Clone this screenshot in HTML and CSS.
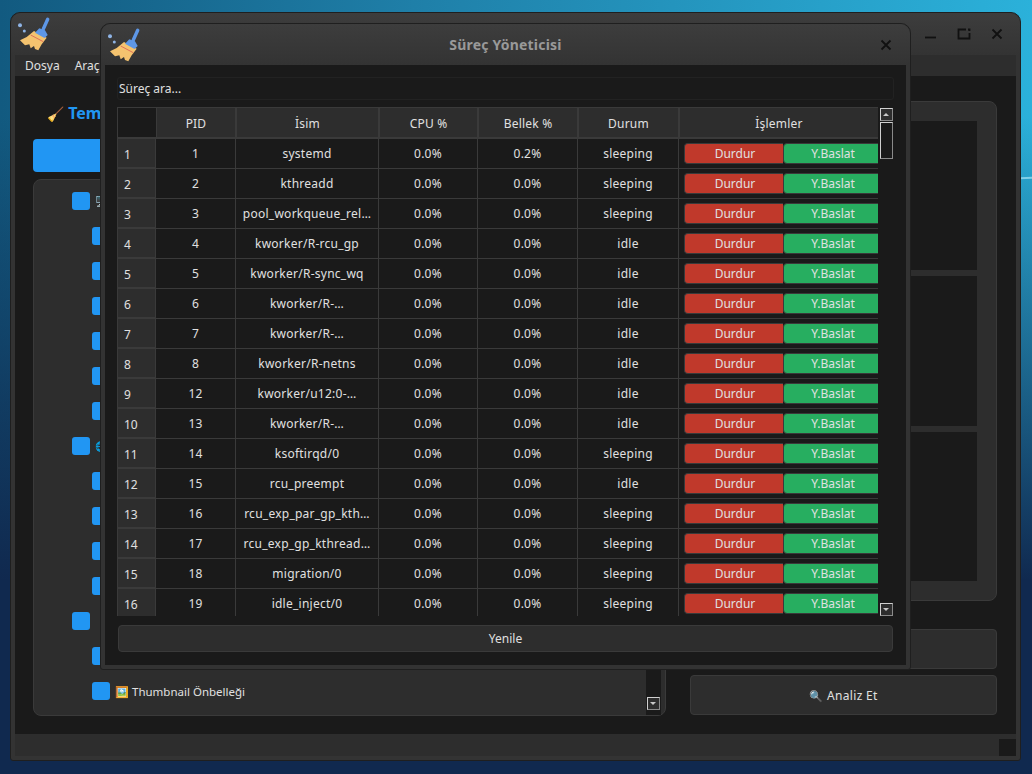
FILE: index.html
```html
<!DOCTYPE html>
<html lang="tr">
<head>
<meta charset="utf-8">
<title>Süreç Yöneticisi</title>
<link rel="stylesheet" href="styles.css">
</head>
<body>
<svg class="defs" width="0" height="0">
  <symbol id="broom" viewBox="0 0 34 34">
    <circle cx="2" cy="8.3" r="2" fill="#8fb4e6"/>
    <circle cx="6.3" cy="14" r="1.5" fill="#8fb4e6"/>
    <path d="M29.7 2.3 25.3 12" stroke="#5e97e6" stroke-width="3.4" stroke-linecap="round" fill="none"/>
    <path d="M2 23.3 8.7 20 16 14 28.7 20.7 23.7 27.3 20.3 33.3 17 32 16 29 12.7 31.3 11.3 27.3 7 28.3Z" fill="#f4c36f"/>
    <path d="M12.7 18 25.3 24.7" stroke="#e0705a" stroke-width="1" fill="none"/>
    <path d="M21.3 11.3 27 13.3 29.7 18 26.5 21 17 15.7Z" fill="#5e97e6"/>
  </symbol>
</svg>
<main class="desktop">
  <span class="streak"></span>
  <section class="window main-window">
    <header class="titlebar main-titlebar">
      <svg class="app-icon"><use href="#broom"/></svg>
      <div class="controls">
        <svg class="ctl" viewBox="0 0 14 14"><path d="M1 10.5H12" class="ctl-line"/></svg>
        <svg class="ctl" viewBox="0 0 14 14"><path d="M9 2.5H1.5V11.5H12.5V6M11 2.5H12.5V4" class="ctl-line"/></svg>
        <svg class="ctl" viewBox="0 0 14 14"><path d="M2.5 2.5 11.5 11.5M11.5 2.5 2.5 11.5" class="ctl-line"/></svg>
      </div>
    </header>
    <nav class="menubar"><span>Dosya</span><span>Araçlar</span></nav>
    <div class="content">
      <div class="left-col">
        <h1 class="heading"><span class="heading-emoji">🧹</span> Temizlik</h1>
        <button class="select-all"></button>
        <div class="check-group">
          <div class="checks">
            <label class="check l0"><i></i><span class="peek">🖥️</span></label>
            <label class="check l1"><i></i></label>
            <label class="check l1"><i></i></label>
            <label class="check l1"><i></i></label>
            <label class="check l1"><i></i></label>
            <label class="check l1"><i></i></label>
            <label class="check l1"><i></i></label>
            <label class="check l0"><i></i><span class="peek">🌐</span></label>
            <label class="check l1"><i></i></label>
            <label class="check l1"><i></i></label>
            <label class="check l1"><i></i></label>
            <label class="check l1"><i></i></label>
            <label class="check l0"><i></i></label>
            <label class="check l1"><i></i></label>
            <label class="check l1"><i></i><span class="thumb"><span class="small-emoji">🖼️</span> Thumbnail Önbelleği</span></label>
          </div>
          <div class="scrollbar group-scroll">
            <span class="sb-btn down"></span>
          </div>
        </div>
      </div>
      <div class="right-col">
        <div class="info-group">
          <div class="info-pane"></div>
          <div class="info-pane"></div>
          <div class="info-pane"></div>
        </div>
        <button class="wide-btn"></button>
        <button class="wide-btn"><span class="small-emoji">🔍</span> Analiz Et</button>
      </div>
    </div>
    <footer class="statusbar"><span class="grip"></span></footer>
  </section>

  <section class="window dialog">
    <header class="titlebar dialog-titlebar">
      <svg class="app-icon"><use href="#broom"/></svg>
      <h2 class="dialog-title">Süreç Yöneticisi</h2>
      <svg class="ctl" viewBox="0 0 14 14"><path d="M2.5 2.5 11.5 11.5M11.5 2.5 2.5 11.5" class="ctl-line"/></svg>
    </header>
    <div class="dialog-body">
      <div class="search">Süreç ara...</div>
      <div class="table-wrap">
        <div class="table-clip">
          <table class="procs">
            <colgroup>
              <col class="c-num"><col class="c-pid"><col class="c-name"><col class="c-cpu"><col class="c-mem"><col class="c-state"><col class="c-act">
            </colgroup>
            <thead>
              <tr><th class="corner"></th><th>PID</th><th>İsim</th><th>CPU %</th><th>Bellek %</th><th>Durum</th><th>İşlemler</th></tr>
            </thead>
            <tbody>
              <tr><th>1</th><td>1</td><td>systemd</td><td>0.0%</td><td>0.2%</td><td>sleeping</td><td><div class="acts"><span class="stop">Durdur</span><span class="restart">Y.Baslat</span></div></td></tr>
              <tr><th>2</th><td>2</td><td>kthreadd</td><td>0.0%</td><td>0.0%</td><td>sleeping</td><td><div class="acts"><span class="stop">Durdur</span><span class="restart">Y.Baslat</span></div></td></tr>
              <tr><th>3</th><td>3</td><td>pool_workqueue_rel…</td><td>0.0%</td><td>0.0%</td><td>sleeping</td><td><div class="acts"><span class="stop">Durdur</span><span class="restart">Y.Baslat</span></div></td></tr>
              <tr><th>4</th><td>4</td><td>kworker/R-rcu_gp</td><td>0.0%</td><td>0.0%</td><td>idle</td><td><div class="acts"><span class="stop">Durdur</span><span class="restart">Y.Baslat</span></div></td></tr>
              <tr><th>5</th><td>5</td><td>kworker/R-sync_wq</td><td>0.0%</td><td>0.0%</td><td>idle</td><td><div class="acts"><span class="stop">Durdur</span><span class="restart">Y.Baslat</span></div></td></tr>
              <tr><th>6</th><td>6</td><td>kworker/R-…</td><td>0.0%</td><td>0.0%</td><td>idle</td><td><div class="acts"><span class="stop">Durdur</span><span class="restart">Y.Baslat</span></div></td></tr>
              <tr><th>7</th><td>7</td><td>kworker/R-…</td><td>0.0%</td><td>0.0%</td><td>idle</td><td><div class="acts"><span class="stop">Durdur</span><span class="restart">Y.Baslat</span></div></td></tr>
              <tr><th>8</th><td>8</td><td>kworker/R-netns</td><td>0.0%</td><td>0.0%</td><td>idle</td><td><div class="acts"><span class="stop">Durdur</span><span class="restart">Y.Baslat</span></div></td></tr>
              <tr><th>9</th><td>12</td><td>kworker/u12:0-…</td><td>0.0%</td><td>0.0%</td><td>idle</td><td><div class="acts"><span class="stop">Durdur</span><span class="restart">Y.Baslat</span></div></td></tr>
              <tr><th>10</th><td>13</td><td>kworker/R-…</td><td>0.0%</td><td>0.0%</td><td>idle</td><td><div class="acts"><span class="stop">Durdur</span><span class="restart">Y.Baslat</span></div></td></tr>
              <tr><th>11</th><td>14</td><td>ksoftirqd/0</td><td>0.0%</td><td>0.0%</td><td>sleeping</td><td><div class="acts"><span class="stop">Durdur</span><span class="restart">Y.Baslat</span></div></td></tr>
              <tr><th>12</th><td>15</td><td>rcu_preempt</td><td>0.0%</td><td>0.0%</td><td>idle</td><td><div class="acts"><span class="stop">Durdur</span><span class="restart">Y.Baslat</span></div></td></tr>
              <tr><th>13</th><td>16</td><td>rcu_exp_par_gp_kth…</td><td>0.0%</td><td>0.0%</td><td>sleeping</td><td><div class="acts"><span class="stop">Durdur</span><span class="restart">Y.Baslat</span></div></td></tr>
              <tr><th>14</th><td>17</td><td>rcu_exp_gp_kthread…</td><td>0.0%</td><td>0.0%</td><td>sleeping</td><td><div class="acts"><span class="stop">Durdur</span><span class="restart">Y.Baslat</span></div></td></tr>
              <tr><th>15</th><td>18</td><td>migration/0</td><td>0.0%</td><td>0.0%</td><td>sleeping</td><td><div class="acts"><span class="stop">Durdur</span><span class="restart">Y.Baslat</span></div></td></tr>
              <tr><th>16</th><td>19</td><td>idle_inject/0</td><td>0.0%</td><td>0.0%</td><td>sleeping</td><td><div class="acts"><span class="stop">Durdur</span><span class="restart">Y.Baslat</span></div></td></tr>
            </tbody>
          </table>
        </div>
        <div class="scrollbar table-scroll">
          <span class="sb-btn up"></span>
          <span class="sb-thumb"></span>
          <span class="sb-btn down"></span>
        </div>
      </div>
      <button class="refresh">Yenile</button>
    </div>
  </section>
</main>
</body>
</html>
```
FILE: styles.css
```css
* { box-sizing: border-box; }
html, body { margin: 0; height: 100%; }
body {
  font-family: "Noto Sans", "Open Sans", sans-serif;
  font-size: 12px;
  color: #e0e0e0;
  overflow: hidden;
}
.defs { position: absolute; }
.desktop {
  position: relative;
  width: 1032px;
  height: 774px;
  overflow: hidden;
  background:
    linear-gradient(to bottom, rgba(15, 40, 80, 0) 15%, #10294f 75%),
    linear-gradient(to right, #125a80 0%, #1f7fa8 40%, #2bb1da 100%);
}
.streak {
  position: absolute;
  left: 1020px;
  top: 177px;
  width: 14px;
  height: 2px;
  background: #7fd0e8;
  transform: rotate(-3deg);
}
.window {
  position: absolute;
  display: flex;
  flex-direction: column;
  background: #333;
  border: 1px solid #1f1f1f;
  border-radius: 10px 10px 3px 3px;
}
.main-window { left: 10px; top: 12px; width: 1011px; height: 749px; padding: 0 4px 4px; }
.dialog { left: 100px; top: 23px; width: 811px; height: 647px; padding: 0 4px 4px; background: #333; }

.titlebar {
  flex: none;
  display: flex;
  align-items: center;
  background: linear-gradient(#3d3d3d, #333);
  margin: 0 -4px;
  border-radius: 10px 10px 0 0;
}
.main-titlebar { height: 42px; padding-left: 7px; justify-content: space-between; }
.dialog-titlebar { height: 41px; padding: 0 17px 0 7px; }
.app-icon { width: 34px; height: 34px; flex: none; }
.controls { display: flex; gap: 19px; padding-right: 16px; }
.ctl { width: 14px; height: 14px; flex: none; }
.ctl-line { fill: none; stroke: #111; stroke-width: 1.8; }
.dialog-title {
  flex: 1;
  margin: 0;
  padding-right: 10px;
  text-align: center;
  font-size: 14px;
  letter-spacing: 0.2px;
  font-weight: 700;
  color: #999;
}

.menubar {
  flex: none;
  height: 21px;
  display: flex;
  gap: 15px;
  align-items: center;
  padding-left: 10px;
  background: #2d2d2d;
  font-size: 12px;
}
.content {
  flex: 1;
  min-height: 0;
  display: flex;
  gap: 24px;
  padding: 0 18px 18px;
  background: #1a1a1a;
}
.left-col { width: 633px; display: flex; flex-direction: column; }
.heading {
  height: 63px;
  flex: none;
  margin: 0;
  padding: 27px 0 0 14px;
  font-size: 16px;
  line-height: 20px;
  font-weight: 700;
  color: #2196f3;
}
.heading-emoji { font-size: 14px; }
.select-all {
  height: 33px;
  flex: none;
  margin-bottom: 7px;
  border: 0;
  border-radius: 4px;
  background: #2196f3;
}
.check-group {
  flex: 1;
  min-height: 0;
  display: flex;
  justify-content: space-between;
  background: #2d2d2d;
  border: 1px solid #3a3a3a;
  border-radius: 8px;
  padding-right: 4px;
}
.checks { padding-top: 12px; display: flex; flex-direction: column; gap: 17px; }
.check { height: 18px; display: flex; align-items: center; gap: 5px; }
.check i { width: 18px; height: 18px; flex: none; background: #2196f3; border-radius: 3px; }
.l0 { padding-left: 38px; }
.l1 { padding-left: 58px; }
.peek { font-size: 10px; }
.thumb { font-size: 11.5px; white-space: nowrap; }
.small-emoji { font-size: 11px; }

.scrollbar { width: 15px; flex: none; display: flex; flex-direction: column; background: #1a1a1a; }
.group-scroll { justify-content: flex-end; padding: 0 0 5px 1px; }
.sb-btn {
  width: 13px;
  height: 13px;
  flex: none;
  position: relative;
  background: #2d2d2d;
  border: 1px solid #d0d0d0;
  border-right-color: #8a8a8a;
  border-bottom-color: #8a8a8a;
}
.sb-btn::after {
  content: "";
  position: absolute;
  left: 2px;
  top: 4px;
  border-left: 3.5px solid transparent;
  border-right: 3.5px solid transparent;
}
.sb-btn.down::after { border-top: 3px solid #c8c8c8; }
.sb-btn.up::after { border-bottom: 3px solid #c8c8c8; }

.right-col { width: 307px; padding-top: 25px; display: flex; flex-direction: column; }
.info-group {
  height: 500px;
  flex: none;
  display: flex;
  flex-direction: column;
  gap: 6px;
  padding: 19px;
  background: #2d2d2d;
  border: 1px solid #3a3a3a;
  border-radius: 8px;
}
.info-pane { flex: 1; background: #1a1a1a; }
.wide-btn {
  height: 40px;
  flex: none;
  margin-top: 6px;
  background: #2d2d2d;
  border: 1px solid #3a3a3a;
  border-radius: 4px;
  color: #e0e0e0;
  font: inherit;
  letter-spacing: 0.3px;
}
.info-group + .wide-btn { margin-top: 28px; }
.statusbar {
  flex: none;
  height: 22px;
  display: flex;
  justify-content: flex-end;
  align-items: flex-end;
  background: #2d2d2d;
}
.grip { width: 17px; height: 17px; background: #1a1a1a; }

.dialog-body {
  flex: 1;
  min-height: 0;
  display: flex;
  flex-direction: column;
  background: #1a1a1a;
  padding: 12px 12px 13px;
}
.search {
  height: 23px;
  flex: none;
  padding-left: 1px;
  line-height: 21px;
  border: 1px solid #222;
  border-radius: 3px;
}
.table-wrap {
  flex: none;
  height: 509px;
  margin-top: 7px;
  display: flex;
}
.table-clip { width: 761px; overflow: hidden; }
.procs {
  table-layout: fixed;
  border-collapse: separate;
  border-spacing: 0;
  width: 761px;
}
.c-num { width: 39px; }
.c-pid { width: 80px; }
.c-name { width: 143px; }
.c-cpu { width: 99px; }
.c-mem { width: 100px; }
.c-state { width: 101px; }
.c-act { width: 199px; }
.procs thead th {
  height: 32px;
  padding: 1px 0 0;
  font-weight: 400;
  letter-spacing: 0.2px;
  background: #2d2d2d;
  border-top: 1px solid #3a3a3a;
  border-left: 1px solid #3a3a3a;
  border-right: 1px solid #3a3a3a;
  border-bottom: 2px solid #3a3a3a;
}
.procs thead th.corner { background: #1a1a1a; border-right: 0; }
.procs thead th:last-child { border-right: 0; }
.procs tbody th {
  height: 30px;
  padding: 3px 0 0 6px;
  text-align: left;
  font-weight: 400;
  background: #2d2d2d;
  border-left: 1px solid #3a3a3a;
  border-bottom: 2px solid #3a3a3a;
  border-right: 1px solid #3a3a3a;
}
.procs td {
  height: 30px;
  padding: 0 2px;
  text-align: center;
  white-space: nowrap;
  overflow: hidden;
  letter-spacing: 0.25px;
  border-right: 1px solid #3a3a3a;
  border-bottom: 1px solid #3a3a3a;
}
.procs td:last-child { border-right: 0; padding: 0 0 0 5px; letter-spacing: 0; }
.acts { display: flex; height: 21px; line-height: 19px; }
.stop, .restart { display: block; flex: none; border: 1px solid #3a3a3a; border-radius: 4px; }
.stop { width: 99px; padding-left: 2px; background: #c0392b; border-right: 0; border-radius: 4px 0 0 4px; }
.restart { width: 100px; background: #27ae60; }

.table-scroll { padding: 1px 0 0 2px; width: 15px; }
.sb-thumb {
  width: 13px;
  height: 37px;
  flex: none;
  margin-top: 1px;
  background: #1a1a1a;
  border: 1px solid #d0d0d0;
  border-right-color: #8a8a8a;
  border-bottom-color: #8a8a8a;
}
.table-scroll .down { margin-top: auto; }
.refresh {
  height: 27px;
  flex: none;
  margin: 9px 1px 0;
  background: #2d2d2d;
  border: 1px solid #3a3a3a;
  border-radius: 4px;
  color: #e0e0e0;
  font: inherit;
}
```
